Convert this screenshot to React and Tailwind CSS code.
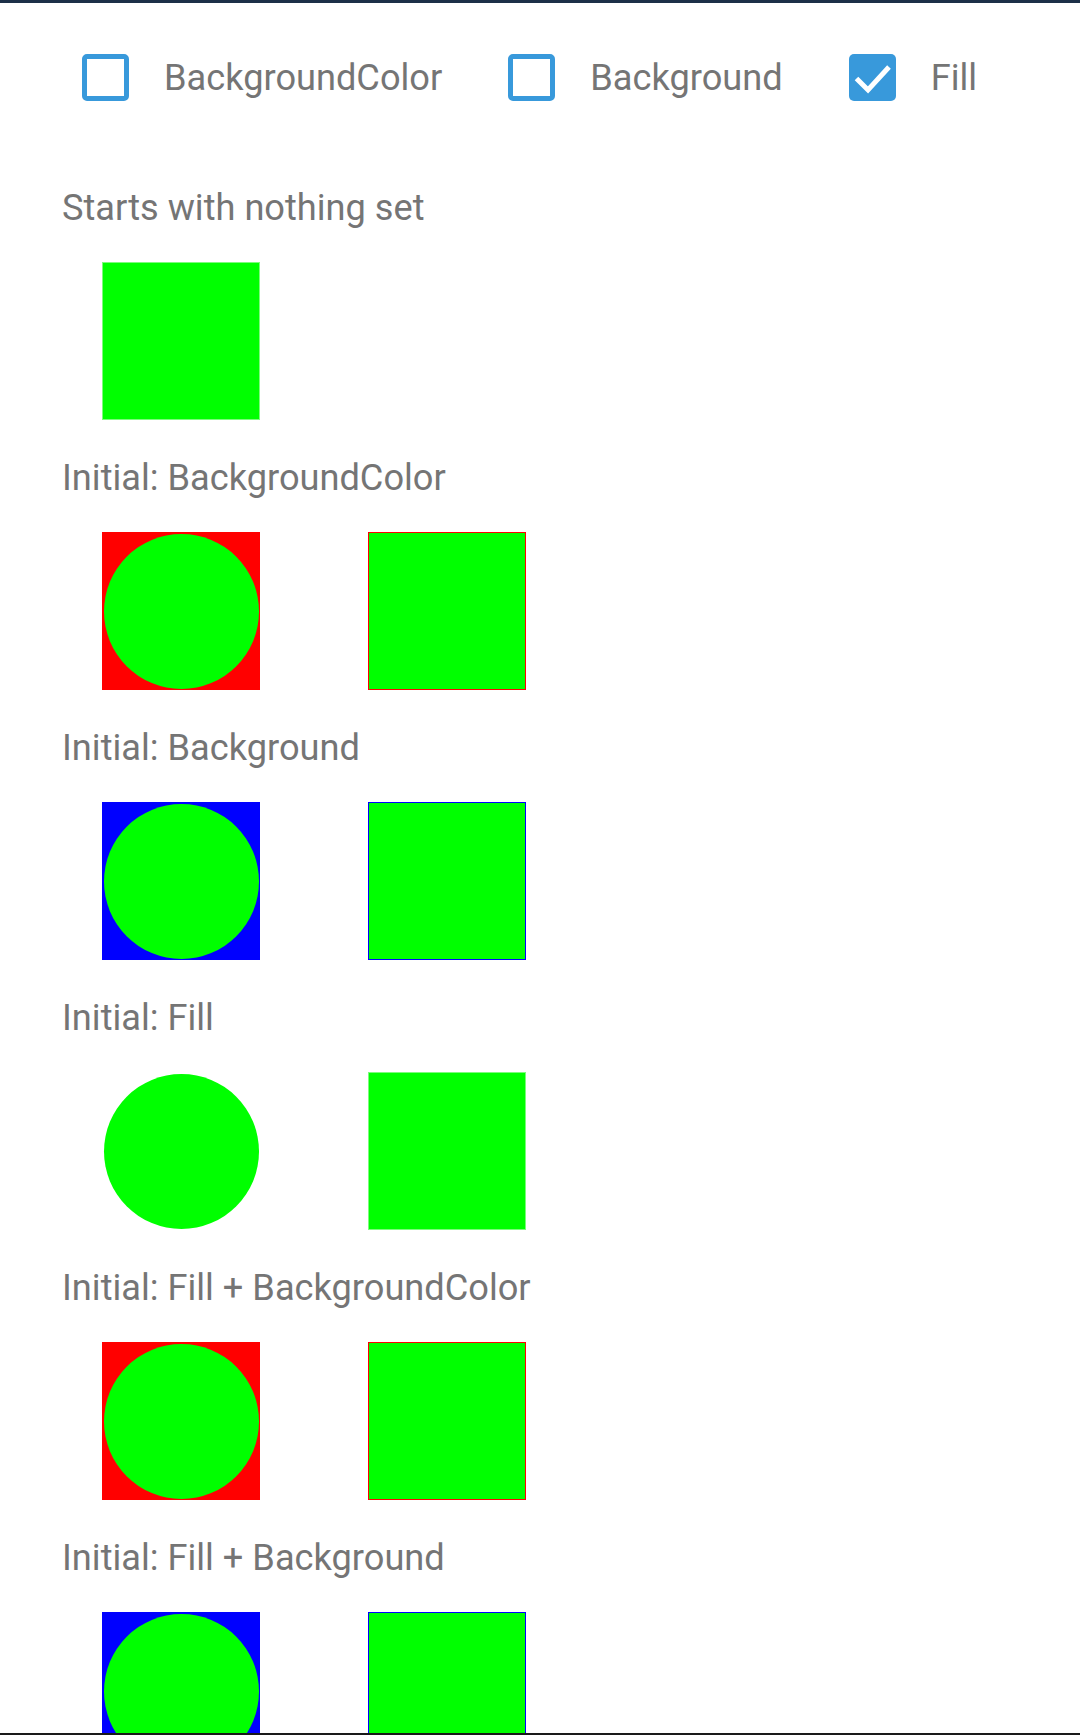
import React from 'react';

const options = [
  { label: 'BackgroundColor', checked: false },
  { label: 'Background', checked: false },
  { label: 'Fill', checked: true },
];

const sections = [
  { title: 'Starts with nothing set', kind: 'none' },
  { title: 'Initial: BackgroundColor', kind: 'red' },
  { title: 'Initial: Background', kind: 'blue' },
  { title: 'Initial: Fill', kind: 'fill' },
  { title: 'Initial: Fill + BackgroundColor', kind: 'red' },
  { title: 'Initial: Fill + Background', kind: 'blue' },
];

const CheckBox = ({ checked }) => {
  if (checked) {
    return (
      <div className="w-[47px] h-[47px] shrink-0 rounded-[5px] bg-[#3899db] flex items-center justify-center">
        <svg width="47" height="47" viewBox="0 0 47 47">
          <polyline
            points="7.5,24.5 19,36 40,13"
            fill="none"
            stroke="#ffffff"
            strokeWidth="5"
          />
        </svg>
      </div>
    );
  }
  return <div className="w-[47px] h-[47px] shrink-0 rounded-[5px] border-[5px] border-[#3899db] bg-white" />;
};

const Swatches = ({ kind }) => {
  // first test case only shows a plain square
  if (kind === 'none') {
    return <div className="w-[158px] h-[158px] border border-[#7cfc7c] bg-[#00ff00]" />;
  }

  if (kind === 'fill') {
    return (
      <div className="flex gap-[108px]">
        <div className="w-[158px] h-[158px] p-[1.5px]">
          <div className="w-full h-full rounded-full bg-[#00ff00]" />
        </div>
        <div className="w-[158px] h-[158px] border border-[#7cfc7c] bg-[#00ff00]" />
      </div>
    );
  }

  const outer = kind === 'red' ? 'bg-[#ff0000]' : 'bg-[#0000ff]';
  const edge = kind === 'red' ? 'border-[#ff0000]' : 'border-[#0000ff]';

  return (
    <div className="flex gap-[108px]">
      <div className={`w-[158px] h-[158px] p-[1.5px] ${outer}`}>
        <div className="w-full h-full rounded-full bg-[#00ff00]" />
      </div>
      <div className={`w-[158px] h-[158px] border-[1.5px] ${edge} bg-[#00ff00]`} />
    </div>
  );
};

export default function App() {
  return (
    <div
      className="w-[1080px] h-[1735px] bg-white flex flex-col overflow-hidden text-[#757575]"
      style={{ fontFamily: 'Roboto, "Noto Sans", sans-serif' }}
    >
      <div className="h-[3px] shrink-0 bg-[#1d3048]" />

      <div className="flex-1 overflow-hidden">
        {/* Toggles */}
        <div className="flex items-center h-[47px] mt-[51px] pl-[82px] gap-[66px]">
          {options.map((o) => (
            <div key={o.label} className="flex items-center gap-[35px]">
              <CheckBox checked={o.checked} />
              <span className="text-[36.2px] leading-[43px]">{o.label}</span>
            </div>
          ))}
        </div>

        <div className="mt-[85px]">
          {sections.map((s) => (
            <div key={s.title} className="pb-[36px]">
              <div className="pl-[62px] h-[43px] text-[36.2px] leading-[43px] whitespace-nowrap">{s.title}</div>
              <div className="mt-[33px] pl-[102px]">
                <Swatches kind={s.kind} />
              </div>
            </div>
          ))}
        </div>
      </div>

      <div className="h-[2px] shrink-0 bg-[#1a1a1a]" />
    </div>
  );
}
